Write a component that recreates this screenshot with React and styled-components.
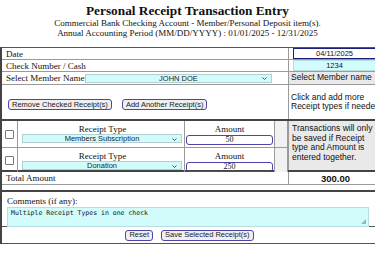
import React from 'react';
import styled, { createGlobalStyle } from 'styled-components';

const GlobalStyle = createGlobalStyle`
  html, body { margin: 0; padding: 0; background: #fff; }
  body {
    width: 375px;
    height: 257px;
    overflow: hidden;
    font-family: "Liberation Serif", "Times New Roman", serif;
    color: #111;
  }
`;

const Header = styled.header`
  text-align: center;
  padding-top: 3px;
  height: 47px;
  box-sizing: border-box;

  h1 {
    margin: 0;
    font-size: 13.3px;
    line-height: 16px;
  }

  p {
    margin: 0;
    font-size: 9px;
    line-height: 9.5px;
  }
`;

const Form = styled.div`
  width: 380px;
  border-top: 1px solid #555;
  border-left: 2px solid #444;
`;

const Row = styled.div`
  display: grid;
  grid-template-columns: 287px 1fr;
  height: ${p => p.h}px;
  box-sizing: border-box;
  border-bottom: ${p => (p.thick ? '2px solid #444' : '1px solid #9a9a9a')};
`;

const Cell = styled.div`
  display: flex;
  align-items: center;
  padding-left: ${p => p.pad ?? 4}px;
  border-right: 1px solid #9a9a9a;
  font-size: 9px;
  white-space: nowrap;
  box-sizing: border-box;
  min-width: 0;
`;

const Label = styled.span`
  flex: 0 0 ${p => p.w}px;
  white-space: nowrap;
`;

const Side = styled.div`
  display: flex;
  align-items: ${p => p.top ? 'flex-start' : 'center'};
  padding: ${p => p.top ? '3px 2px 0 3px' : '0 2px'};
  background: ${p => p.shade ? '#e9e9e9' : '#fff'};
  font-family: "Liberation Sans", Arial, sans-serif;
  font-size: 8.5px;
  line-height: 9.5px;
  box-sizing: border-box;
`;

const Field = styled.div`
  flex: 1;
  height: 9px;
  margin: 0 4px 0 2px;
  display: flex;
  align-items: center;
  justify-content: center;
  background: ${p => p.cyan ? '#d2fbfc' : '#fff'};
  border: 1px solid ${p => p.cyan ? '#b8dfe0' : '#1b1f7a'};
  font-family: "Liberation Sans", Arial, sans-serif;
  font-size: 7.5px;
`;

const Select = styled.div`
  position: relative;
  flex: 0 0 auto;
  width: ${p => p.w}px;
  height: 9px;
  display: flex;
  align-items: center;
  justify-content: center;
  background: #d2fbfc;
  border: 1px solid #b0cfd0;
  font-family: "Liberation Sans", Arial, sans-serif;
  font-size: 7.5px;
  color: #222;
  box-sizing: border-box;

  svg {
    position: absolute;
    right: 4px;
    top: 2.5px;
  }
`;

const Chevron = () => (
  <svg width="5" height="3" viewBox="0 0 5 3">
    <path d="M0.5 0.5 L2.5 2.5 L4.5 0.5" fill="none" stroke="#555" strokeWidth="1" />
  </svg>
);

const Btn = styled.button`
  height: 11px;
  padding: 0 3px;
  margin: 0;
  border: 1.5px solid #4d45a8;
  border-radius: 3px;
  background: #efeff2;
  font-family: "Liberation Sans", Arial, sans-serif;
  font-size: 7.5px;
  line-height: 8px;
  color: #222;
  box-sizing: border-box;
`;

const BtnBar = styled.div`
  display: flex;
  gap: ${p => p.gap}px;
  align-items: center;
  justify-content: ${p => p.center ? 'center' : 'flex-start'};
  padding-left: ${p => p.center ? 0 : 6}px;
  padding-top: ${p => p.pt ?? 0}px;
  height: 100%;
  box-sizing: border-box;
`;

const Receipts = styled.div`
  border-right: 1px solid #9a9a9a;
  display: flex;
  flex-direction: column;
`;

const ReceiptRow = styled.div`
  display: grid;
  grid-template-columns: 16px 167px 90px 1fr;
  height: ${p => p.h}px;
  border-bottom: ${p => p.last ? 'none' : '1px solid #9a9a9a'};
  box-sizing: border-box;
`;

const Check = styled.div`
  display: flex;
  align-items: center;
  justify-content: center;
  border-right: 1px solid #9a9a9a;

  span {
    width: 7px;
    height: 7px;
    border: 1px solid #777;
    border-radius: 1px;
    background: #fff;
  }
`;

const Stack = styled.div`
  display: flex;
  flex-direction: column;
  align-items: stretch;
  padding: 3px 1px 0 ${p => p.pl ?? 0}px;
  border-right: 1px solid #9a9a9a;
  font-size: 9px;
  line-height: 10px;
  text-align: center;
`;

const Amount = styled.div`
  height: 10px;
  margin-top: 1px;
  border: 1.5px solid #4d45a8;
  border-radius: 3px;
  display: flex;
  align-items: center;
  justify-content: center;
  font-size: 8px;
  box-sizing: border-box;
`;

const Spacer = styled.div`
  background: #f1f1f1;
  border-right: 1px solid #9a9a9a;
`;

const Total = styled.div`
  display: flex;
  align-items: center;
  justify-content: center;
  font-family: "Liberation Sans", Arial, sans-serif;
  font-weight: bold;
  font-size: 9.5px;
`;

const Comments = styled.div`
  margin-top: 5px;
  border-top: 2px solid #444;
  border-bottom: 1px solid #555;
  padding: 5px 13px 2px 5px;
  height: 37px;
  box-sizing: border-box;
  font-size: 9px;
  line-height: 9px;
`;

const TextArea = styled.div`
  position: relative;
  height: 20px;
  margin-top: 1px;
  background: #d2fbfc;
  border: 1px solid #b8dfe0;
  font-family: "DejaVu Sans Mono", "Liberation Mono", monospace;
  font-size: 6.5px;
  line-height: 9px;
  padding: 1px 3px;
  box-sizing: border-box;

  &::after {
    content: '';
    position: absolute;
    right: 2px;
    bottom: 2px;
    border-left: 5px solid transparent;
    border-bottom: 5px solid #a6b0b0;
  }
`;

const Footer = styled.div`
  width: 375px;
  height: 17px;
  border-bottom: 1px solid #555;
  box-sizing: border-box;
`;

export default function App() {
  return (
    <>
      <GlobalStyle />
      <Header>
        <h1>Personal Receipt Transaction Entry</h1>
        <p>Commercial Bank Checking Account - Member/Personal Deposit item(s).</p>
        <p>Annual Accounting Period (MM/DD/YYYY) : 01/01/2025 - 12/31/2025</p>
      </Header>
      <Form>
        <Row h={12}>
          <Cell>Date</Cell>
          <Side><Field>04/11/2025</Field></Side>
        </Row>
        <Row h={12}>
          <Cell>Check Number / Cash</Cell>
          <Side><Field cyan>1234</Field></Side>
        </Row>
        <Row h={13}>
          <Cell>
            <Label w={79}>Select Member Name</Label>
            <Select w={187}>
              JOHN DOE
              <Chevron />
            </Select>
          </Cell>
          <Side shade>Select Member name</Side>
        </Row>
        <Row h={36} thick>
          <Cell pad={0}>
            <BtnBar gap={10} pt={5}>
              <Btn>Remove Checked Receipt(s)</Btn>
              <Btn>Add Another Receipt(s)</Btn>
            </BtnBar>
          </Cell>
          <Side>Click and add more<br />Receipt types if needed</Side>
        </Row>
        <Row h={51} thick>
          <Receipts>
            <ReceiptRow h={27}>
              <Check><span /></Check>
              <Stack pl={4}>
                Receipt Type
                <Select w={160}>
                  Members Subscription
                  <Chevron />
                </Select>
              </Stack>
              <Stack pl={1}>
                Amount
                <Amount>50</Amount>
              </Stack>
              <Spacer />
            </ReceiptRow>
            <ReceiptRow h={22} last>
              <Check><span /></Check>
              <Stack pl={4}>
                Receipt Type
                <Select w={160}>
                  Donation
                  <Chevron />
                </Select>
              </Stack>
              <Stack pl={1}>
                Amount
                <Amount>250</Amount>
              </Stack>
              <Spacer />
            </ReceiptRow>
          </Receipts>
          <Side shade top>Transactions will only be saved if Receipt type and Amount is entered together.</Side>
        </Row>
        <Row h={13}>
          <Cell>Total Amount</Cell>
          <Total>300.00</Total>
        </Row>
        <Comments>
          Comments (if any):
          <TextArea>Multiple Receipt Types in one check</TextArea>
        </Comments>
        <Footer>
          <BtnBar center gap={8}>
            <Btn>Reset</Btn>
            <Btn>Save Selected Receipt(s)</Btn>
          </BtnBar>
        </Footer>
      </Form>
    </>
  );
}
